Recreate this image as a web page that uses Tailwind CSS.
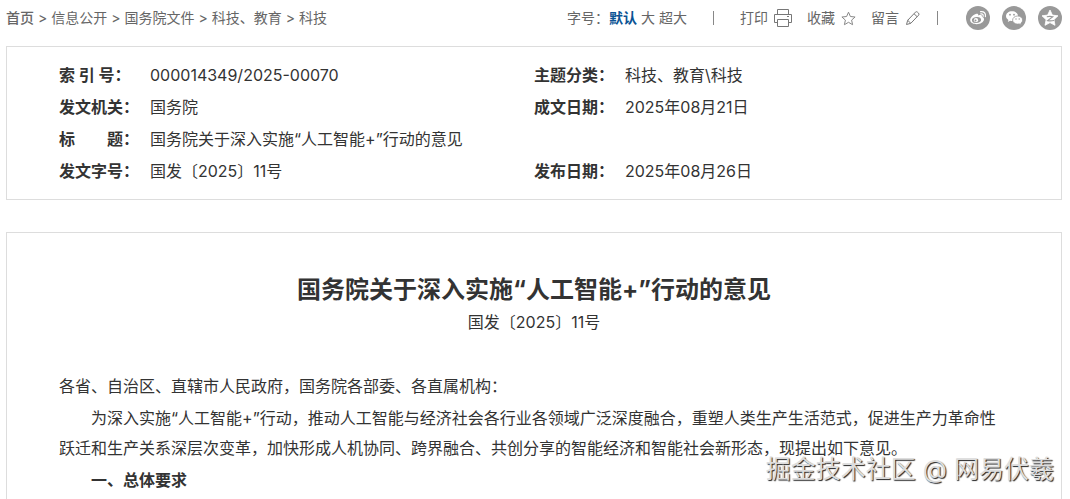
<!DOCTYPE html>
<html lang="zh-CN">
<head>
  <meta charset="UTF-8" />
  <meta name="viewport" content="width=device-width, initial-scale=1" />
  <title>国务院关于深入实施“人工智能+”行动的意见</title>
  <script src="https://cdn.jsdelivr.net/npm/@tailwindcss/browser@4"></script>
</head>
<body class="relative flex min-h-screen flex-col bg-white pl-[6px] pr-2 font-[Inter,'Noto_Sans_CJK_SC',sans-serif] text-[#333]">

  <!-- Breadcrumb and page tools -->
  <header class="flex h-[46px] items-start justify-between pt-[6px] text-sm leading-6 text-[#666]">
    <nav class="flex gap-1">
      <a href="#" class="font-medium">首页</a>
      <span>&gt;</span>
      <a href="#">信息公开</a>
      <span>&gt;</span>
      <a href="#">国务院文件</a>
      <span>&gt;</span>
      <a href="#">科技、教育</a>
      <span>&gt;</span>
      <a href="#">科技</a>
    </nav>
    <div class="flex items-center">
      <span>字号：</span>
      <div class="flex gap-1">
        <button type="button" class="font-bold text-[#0b5394]">默认</button>
        <button type="button">大</button>
        <button type="button">超大</button>
      </div>
      <span class="ml-[26px] h-[14px] w-px bg-[#888]"></span>
      <button type="button" class="ml-[26px] flex items-center gap-[6px]">
        打印
        <svg class="h-[18px] w-[18px]" viewBox="0 0 18 18" fill="none" stroke="#777" stroke-width="1">
          <path d="M3.5 5.5v-5h11v5M3.5 13.5h-3v-8h17v8h-3M3.500 10.500h11v7h-11z" />
          <path d="M13 7.500h2" />
        </svg>
      </button>
      <button type="button" class="ml-[15px] flex items-center gap-[6px]">
        收藏
        <svg class="h-[15px] w-[15px]" viewBox="0 0 15 15" fill="none" stroke="#888" stroke-width="1" stroke-linejoin="round">
          <path d="M7.500 1.200l1.900 4.300 4.700.5-3.500 3.100 1 4.600-4.100-2.400-4.100 2.400 1-4.600L.9 6l4.700-.5z" />
        </svg>
      </button>
      <button type="button" class="ml-[15px] flex items-center gap-[6px]">
        留言
        <svg class="h-4 w-4" viewBox="0 0 16 16" fill="none" stroke="#777" stroke-width="1" stroke-linejoin="round">
          <path d="M1.500 14.500l1.200-4.200 7.700-8.100q1-1 2.100 0l1 .9q1 1 .1 2.100l-7.800 8.100zM9 3.700l3.100 3M2.700 10.300l3.100 3" />
        </svg>
      </button>
      <span class="ml-4 h-[14px] w-px bg-[#888]"></span>
      <div class="ml-7 flex gap-3">
        <button type="button" aria-label="微博">
          <svg class="h-6 w-6" viewBox="0 0 24 24">
            <circle cx="12" cy="12" r="12" fill="#999" />
            <path d="M9.700 8c1.600-.7 2.900-.3 2.500 1.400 2.300-.9 4.200-.6 3.700 1.300 1.500.5 2.300 1.500 2.100 2.800-.3 2.600-3.700 4.700-7.300 4.700-3.700 0-6.500-1.700-6.500-4.200C4.200 11.800 6.900 9.100 9.700 8z" fill="#fff" />
            <ellipse cx="10.500" cy="14" rx="4.600" ry="3" fill="#999" transform="rotate(-7 10.500 14)" />
            <circle cx="10" cy="14.200" r="2.100" fill="#fff" />
            <circle cx="9.500" cy="14.500" r="1" fill="#999" />
            <path d="M14.600 5.700c3.300-.6 5.600 1.800 4.800 5M14.800 7.900c1.700-.2 2.700.9 2.300 2.400" fill="none" stroke="#fff" stroke-width="1.200" stroke-linecap="round" />
          </svg>
        </button>
        <button type="button" aria-label="微信">
          <svg class="h-6 w-6" viewBox="0 0 24 24">
            <circle cx="12" cy="12" r="12" fill="#999" />
            <path d="M10 5.200c3.400 0 6 2.100 6 4.900s-2.600 4.900-6 4.900c-.7 0-1.300-.1-1.900-.3L5.800 16l.6-2.100C4.900 13 4 11.700 4 10.100c0-2.800 2.600-4.900 6-4.900z" fill="#fff" />
            <path d="M15.600 10c2.800 0 5 1.800 5 4.100 0 1.300-.7 2.400-1.800 3.200l.5 1.700-2-1.100c-.5.1-1.100.2-1.700.2-2.800 0-5-1.800-5-4s2.200-4.100 5-4.100z" fill="#fff" stroke="#999" stroke-width=".8" />
            <g fill="#999">
              <circle cx="8" cy="8.700" r=".9" />
              <circle cx="12" cy="8.700" r=".9" />
              <circle cx="14" cy="13" r=".7" />
              <circle cx="17.200" cy="13" r=".7" />
            </g>
          </svg>
        </button>
        <button type="button" aria-label="QQ空间">
          <svg class="h-6 w-6" viewBox="0 0 24 24">
            <circle cx="12" cy="12" r="12" fill="#999" />
            <path d="M12 4l2.400 5.100 5.600.7-4.100 3.900 1.100 5.600-5-2.700-5 2.700 1.100-5.600L4 9.800l5.600-.7z" fill="#fff" stroke="#fff" stroke-width=".8" stroke-linejoin="round" />
            <path d="M8.800 10.700q3.200-.6 6 0l-5.200 3.900q3 .5 6.400-.1" fill="none" stroke="#999" stroke-width="1.100" />
          </svg>
        </button>
      </div>
    </div>
  </header>

  <!-- Document index -->
  <section class="border border-[#ddd] px-[52px] py-3">
    <table class="w-full table-fixed text-left text-base leading-8">
      <colgroup>
        <col class="w-[91px]" />
        <col />
        <col class="w-[91px]" />
        <col />
      </colgroup>
      <tbody>
        <tr>
          <th scope="row" class="p-0 font-bold whitespace-nowrap">索 引 号：</th>
          <td class="p-0">000014349/2025-00070</td>
          <th scope="row" class="p-0 font-bold whitespace-nowrap">主题分类：</th>
          <td class="p-0">科技、教育\科技</td>
        </tr>
        <tr>
          <th scope="row" class="p-0 font-bold whitespace-nowrap">发文机关：</th>
          <td class="p-0">国务院</td>
          <th scope="row" class="p-0 font-bold whitespace-nowrap">成文日期：</th>
          <td class="p-0">2025年08月21日</td>
        </tr>
        <tr>
          <th scope="row" class="p-0 font-bold whitespace-nowrap">标　　题：</th>
          <td class="p-0" colspan="3">国务院关于深入实施“人工智能+”行动的意见</td>
        </tr>
        <tr>
          <th scope="row" class="p-0 font-bold whitespace-nowrap">发文字号：</th>
          <td class="p-0">国发〔2025〕11号</td>
          <th scope="row" class="p-0 font-bold whitespace-nowrap">发布日期：</th>
          <td class="p-0">2025年08月26日</td>
        </tr>
      </tbody>
    </table>
  </section>

  <!-- Document text -->
  <main class="mt-8 flex-1 border border-b-0 border-[#ddd] px-[52px] pt-[41px]">
    <h1 class="text-center text-2xl leading-8 font-bold">国务院关于深入实施“人工智能+”行动的意见</h1>
    <p class="text-center text-base leading-8">国发〔2025〕11号</p>
    <div class="mt-[33px] flex flex-col gap-[2px] text-base leading-[30px]">
      <p>各省、自治区、直辖市人民政府，国务院各部委、各直属机构：</p>
      <p class="indent-8">为深入实施“人工智能+”行动，推动人工智能与经济社会各行业各领域广泛深度融合，重塑人类生产生活范式，促进生产力革命性跃迁和生产关系深层次变革，加快形成人机协同、跨界融合、共创分享的智能经济和智能社会新形态，现提出如下意见。</p>
      <h2 class="indent-8 font-bold">一、总体要求</h2>
    </div>
  </main>

  <div class="pointer-events-none absolute right-4 bottom-3 text-[25px] leading-9 text-[#ddd] [text-shadow:1px_1px_1px_#222]">掘金技术社区 @ 网易伏羲</div>
</body>
</html>
